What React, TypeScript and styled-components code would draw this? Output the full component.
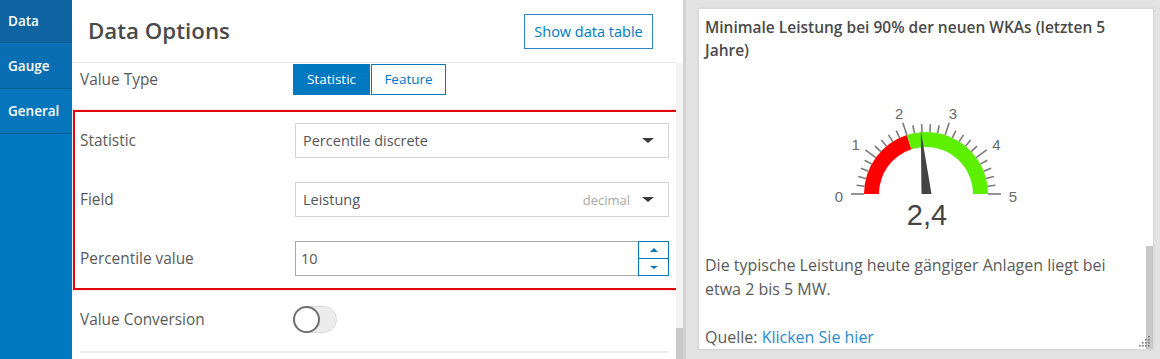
import React from "react";
import styled, { createGlobalStyle } from "styled-components";

const Global = createGlobalStyle`
  html, body { margin: 0; padding: 0; }
  body { font-family: "Open Sans", Lato, sans-serif; background: #fff; }
  * { box-sizing: border-box; }
`;

const Page = styled.div`
  display: flex;
  width: 1160px;
  height: 359px;
  overflow: hidden;
`;

const Sidebar = styled.nav`
  width: 72px;
  flex: none;
  background: #0079c1;
  display: flex;
  flex-direction: column;
`;

const Tab = styled.div<{ $bg: string; $h: number }>`
  height: ${(p) => p.$h}px;
  background: ${(p) => p.$bg};
  border-bottom: 1px solid #0b5e94;
  color: #fff;
  font-size: 13.5px;
  font-weight: 600;
  padding-left: 8px;
  display: flex;
  align-items: center;
`;

const Main = styled.section`
  width: 611px;
  flex: none;
  display: flex;
  flex-direction: column;
  background: #fff;
`;

const Header = styled.header`
  height: 63px;
  flex: none;
  display: flex;
  align-items: center;
  justify-content: space-between;
  padding: 0 23px 2px 16px;
  border-bottom: 1px solid #e6e6e6;
  margin-right: 7px;
`;

const Title = styled.h1`
  margin: 0;
  font-size: 22.3px;
  font-weight: 600;
  color: #4a4a4a;
`;

const OutlineButton = styled.button`
  height: 35px;
  width: 129px;
  margin-top: 2px;
  border: 1px solid #2a86c6;
  background: #fff;
  color: #0079c1;
  font-family: inherit;
  font-size: 14.5px;
  padding: 0;
`;

const ContentWrap = styled.div`
  flex: 1;
  display: flex;
  min-height: 0;
`;

const Content = styled.div`
  flex: 1;
  display: flex;
  flex-direction: column;
`;

const ScrollTrack = styled.div`
  width: 7px;
  flex: none;
  background: #f4f4f4;
  display: flex;
  flex-direction: column;
  justify-content: flex-end;
`;

const ScrollThumb = styled.div<{ $h: number }>`
  height: ${(p) => p.$h}px;
  background: #c9c9c9;
`;

const Row = styled.div<{ $h: number; $pl?: number; $mt?: number }>`
  height: ${(p) => p.$h}px;
  margin-top: ${(p) => p.$mt ?? 0}px;
  display: flex;
  align-items: center;
  padding-left: ${(p) => p.$pl ?? 8}px;
`;

const Label = styled.div<{ $w: number }>`
  width: ${(p) => p.$w}px;
  flex: none;
  color: #5a5a5a;
  font-size: 15.4px;
`;

const Segmented = styled.div`
  display: flex;
  height: 31px;
`;

const SegButton = styled.button<{ $active?: boolean }>`
  height: 31px;
  width: ${(p) => (p.$active ? 77 : 75)}px;
  border: 1px solid #0079c1;
  background: ${(p) => (p.$active ? "#0079c1" : "#fff")};
  color: ${(p) => (p.$active ? "#fff" : "#0079c1")};
  font-family: inherit;
  font-size: 13.5px;
  padding: 0;
  margin-right: 1px;
`;

const Highlight = styled.div`
  margin: 15px -3px 0 1px;
  border: 2px solid #e0060c;
  box-shadow: 0 0 1px rgba(200, 0, 0, 0.5);
  padding: 11px 0 12px 0;
  display: flex;
  flex-direction: column;
  gap: 24px;
`;

const Select = styled.div`
  width: 374px;
  height: 35px;
  border: 1px solid #d4d4d4;
  display: flex;
  align-items: center;
  padding: 0 14px 0 7px;
  color: #555;
  font-size: 14.5px;
`;

const SelectText = styled.span`
  flex: 1;
`;

const Hint = styled.span`
  color: #a9a9a9;
  font-size: 13px;
  margin-right: 12px;
`;

const Caret = styled.span<{ $c?: string; $s?: number }>`
  width: 0;
  height: 0;
  border-left: ${(p) => p.$s ?? 6}px solid transparent;
  border-right: ${(p) => p.$s ?? 6}px solid transparent;
  border-top: ${(p) => Math.round((p.$s ?? 6) * 0.8)}px solid ${(p) => p.$c ?? "#3a3a3a"};
`;

const CaretUp = styled.span`
  width: 0;
  height: 0;
  border-left: 4px solid transparent;
  border-right: 4px solid transparent;
  border-bottom: 4px solid #0079c1;
`;

const NumberInput = styled.div`
  width: 374px;
  height: 35px;
  border: 1px solid #a8a8a8;
  display: flex;
  align-items: center;
  color: #555;
  font-size: 14.5px;
`;

const NumberText = styled.span`
  flex: 1;
  padding-left: 5px;
`;

const Spinner = styled.div`
  width: 31px;
  height: 35px;
  margin: -1px -1px -1px 0;
  display: flex;
  flex-direction: column;
`;

const SpinBtn = styled.div`
  flex: 1;
  border: 1px solid #0079c1;
  display: flex;
  align-items: center;
  justify-content: center;
  & + & { border-top: none; }
`;

const Toggle = styled.div`
  width: 44px;
  height: 27px;
  border-radius: 14px;
  background: #ececec;
  border: 1px solid #dcdcdc;
  display: flex;
  align-items: center;
`;

const Knob = styled.div`
  width: 27px;
  height: 27px;
  margin-left: -1px;
  border-radius: 50%;
  background: #fff;
  border: 2px solid #6f6f6f;
`;

const Separator = styled.div`
  margin: 18px 8px 0 8px;
  border-top: 2px solid #ececec;
`;

const Side = styled.section`
  flex: 1;
  background: #e3e3e3;
  border-left: 3px solid #d2d2d2;
  padding: 8px 6px 9px 12px;
  display: flex;
`;

const Card = styled.div`
  flex: 1;
  background: #fff;
  border: 1px solid #d9d9d9;
  box-shadow: 0 0 2px rgba(0, 0, 0, 0.08);
  display: flex;
  position: relative;
`;

const CardBody = styled.div`
  flex: 1;
  padding: 7px 6px 0 6px;
  display: flex;
  flex-direction: column;
`;

const CardTitle = styled.div`
  font-size: 15.5px;
  font-weight: 600;
  color: #4a4a4a;
  line-height: 23px;
  padding-right: 20px;
`;

const GaugeWrap = styled.div`
  height: 191px;
  display: flex;
  justify-content: center;
  padding-left: 7px;
`;

const Para = styled.p<{ $mb?: number }>`
  margin: 0 0 ${(p) => p.$mb ?? 0}px 0;
  font-size: 16px;
  line-height: 24px;
  color: #5a5a5a;
  padding-right: 20px;
`;

const Link = styled.a`
  color: #2a8bd0;
  text-decoration: none;
`;

const CardScroll = styled.div`
  width: 7px;
  flex: none;
  display: flex;
  flex-direction: column;
  justify-content: flex-end;
`;

const Grip = styled.svg`
  position: absolute;
  right: 2px;
  bottom: 2px;
`;

const CX = 100;
const CY = 132;

function polar(r: number, deg: number) {
  const a = (deg * Math.PI) / 180;
  return [CX + r * Math.cos(a), CY - r * Math.sin(a)];
}

function bandPath(from: number, to: number, ro: number, ri: number) {
  const [x1, y1] = polar(ro, from);
  const [x2, y2] = polar(ro, to);
  const [x3, y3] = polar(ri, to);
  const [x4, y4] = polar(ri, from);
  return `M${x1} ${y1} A${ro} ${ro} 0 0 1 ${x2} ${y2} L${x3} ${y3} A${ri} ${ri} 0 0 0 ${x4} ${y4} Z`;
}

function Gauge() {
  const ticks = Array.from({ length: 26 }, (_, i) => i);
  const labels = [0, 1, 2, 3, 4, 5];
  const needleDeg = 180 - 2.37 * 36;
  const [tx, ty] = polar(64, needleDeg);
  return (
    <svg width="200" height="191" viewBox="0 0 200 191">
      <path d={bandPath(180, 108, 62, 47)} fill="#ff0000" />
      <path d={bandPath(108, 0, 62, 47)} fill="#5cf000" />
      {ticks.map((i) => {
        const deg = 180 - i * 7.2;
        const [x1, y1] = polar(62, deg);
        const [x2, y2] = polar(i % 5 === 0 ? 75 : 70, deg);
        return <line key={i} x1={x1} y1={y1} x2={x2} y2={y2} stroke="#7a7a7a" strokeWidth="1.6" />;
      })}
      {labels.map((v) => {
        const [x, y] = polar(87, 180 - v * 36);
        return (
          <text key={v} x={x} y={y + 2} textAnchor="middle" dominantBaseline="central" fontSize="15" fill="#6a6a6a" fontFamily="'Liberation Sans', sans-serif">
            {v}
          </text>
        );
      })}
      <polygon points={`${CX - 4.5},${CY} ${CX + 5.5},${CY} ${tx},${ty}`} fill="#444" />
      <text x={CX + 1} y={CY + 31} textAnchor="middle" fontSize="29" fill="#444" fontFamily="'Liberation Sans', sans-serif">
        2,4
      </text>
    </svg>
  );
}

export default function App() {
  return (
    <>
      <Global />
      <Page>
        <Sidebar>
          <Tab $bg="#0d64a0" $h={43}>Data</Tab>
          <Tab $bg="#0a6fb2" $h={46}>Gauge</Tab>
          <Tab $bg="#0576bc" $h={45}>General</Tab>
        </Sidebar>
        <Main>
          <Header>
            <Title>Data Options</Title>
            <OutlineButton>Show data table</OutlineButton>
          </Header>
          <ContentWrap>
            <Content>
              <Row $h={32}>
                <Label $w={213}>Value Type</Label>
                <Segmented>
                  <SegButton $active>Statistic</SegButton>
                  <SegButton>Feature</SegButton>
                </Segmented>
              </Row>
              <Highlight>
                <Row $h={35} $pl={5}>
                  <Label $w={215}>Statistic</Label>
                  <Select>
                    <SelectText>Percentile discrete</SelectText>
                    <Caret />
                  </Select>
                </Row>
                <Row $h={35} $pl={5}>
                  <Label $w={215}>Field</Label>
                  <Select>
                    <SelectText>Leistung</SelectText>
                    <Hint>decimal</Hint>
                    <Caret />
                  </Select>
                </Row>
                <Row $h={35} $pl={5}>
                  <Label $w={215}>Percentile value</Label>
                  <NumberInput>
                    <NumberText>10</NumberText>
                    <Spinner>
                      <SpinBtn><CaretUp /></SpinBtn>
                      <SpinBtn><Caret $c="#0079c1" $s={4} /></SpinBtn>
                    </Spinner>
                  </NumberInput>
                </Row>
              </Highlight>
              <Row $h={28} $mt={15}>
                <Label $w={213}>Value Conversion</Label>
                <Toggle><Knob /></Toggle>
              </Row>
              <Separator />
            </Content>
            <ScrollTrack>
              <ScrollThumb $h={31} />
            </ScrollTrack>
          </ContentWrap>
        </Main>
        <Side>
          <Card>
            <CardBody>
              <CardTitle>Minimale Leistung bei 90% der neuen WKAs (letzten 5 Jahre)</CardTitle>
              <GaugeWrap>
                <Gauge />
              </GaugeWrap>
              <Para $mb={24}>Die typische Leistung heute gängiger Anlagen liegt bei etwa 2 bis 5 MW.</Para>
              <Para>
                Quelle: <Link href="#">Klicken Sie hier</Link>
              </Para>
            </CardBody>
            <CardScroll>
              <ScrollThumb $h={103} />
            </CardScroll>
            <Grip width="12" height="12" viewBox="0 0 12 12">
              {[[10, 2], [10, 5], [7, 5], [10, 8], [7, 8], [4, 8], [10, 11], [7, 11], [4, 11], [1, 11]].map(([x, y], i) => (
                <rect key={i} x={x - 1} y={y - 1} width="1.6" height="1.6" fill="#777" />
              ))}
            </Grip>
          </Card>
        </Side>
      </Page>
    </>
  );
}
